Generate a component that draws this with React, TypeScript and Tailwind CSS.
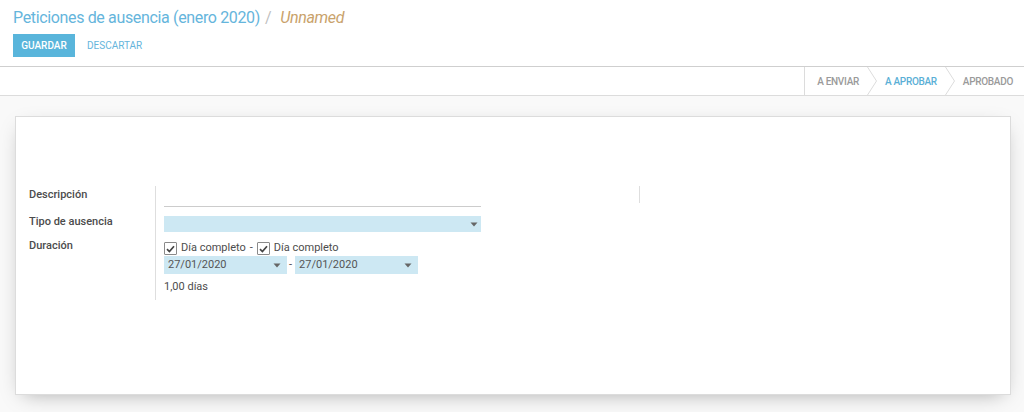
import React from 'react';

const font = { fontFamily: 'Roboto, "Noto Sans", sans-serif' };

const Chevron = () => (
  <svg width="10" height="28" viewBox="0 0 10 28" className="shrink-0">
    <path d="M0.5 0 L9.5 14 L0.5 28" fill="none" stroke="#dcdcdc" strokeWidth="1" />
  </svg>
);

const Caret = () => (
  <svg width="8" height="5" viewBox="0 0 8 5" className="shrink-0">
    <path d="M0.5 0.5 L7.5 0.5 L4 4.5 Z" fill="#666" />
  </svg>
);

const Check = () => (
  <span className="flex h-[13px] w-[13px] shrink-0 items-center justify-center rounded-[1px] border border-[#8a8a8a] bg-white">
    <svg width="9" height="8" viewBox="0 0 9 8">
      <path d="M1 4.2 L3.4 6.5 L8 1.2" fill="none" stroke="#444" strokeWidth="1.7" />
    </svg>
  </span>
);

const DateInput = () => (
  <div className="flex h-[18px] w-[123px] items-center justify-between bg-[#cde8f3] pl-[4px] pr-[6px] text-[11px] text-[#555]">
    <span>27/01/2020</span>
    <Caret />
  </div>
);

const App = () => {
  return (
    <div className="h-[412px] w-[1024px] overflow-hidden bg-[#f9f9f9]" style={font}>
      <div className="border-b border-[#cfcfcf] bg-white px-[13px] pt-[7px] pb-[9px]">
        <div className="flex items-baseline text-[16px] leading-[22px] tracking-[-0.35px]">
          <span className="text-[#65b5dc]">Peticiones de ausencia (enero 2020)</span>
          <span className="ml-[5px] text-[#bfbfbf]">/</span>
          <span className="ml-[9px] italic text-[#c9a26b]">Unnamed</span>
        </div>
        <div className="mt-[5px] flex items-center">
          <button className="h-[23px] w-[62px] bg-[#59b5db] text-[10px] font-medium uppercase text-white">
            Guardar
          </button>
          <button className="ml-[12px] h-[23px] text-[10px] uppercase text-[#65b5dc]">
            Descartar
          </button>
        </div>
      </div>

      <div className="flex h-[29px] justify-end border-b border-[#dcdcdc] bg-white">
        <div className="flex items-center border-l border-[#dcdcdc] pl-[12px] text-[10px] font-medium uppercase tracking-[-0.3px]">
          <span className="text-[#9a9a9a]">A enviar</span>
          <div className="ml-[8px] mr-[8px]">
            <Chevron />
          </div>
          <span className="text-[#5aafd6]">A aprobar</span>
          <div className="ml-[8px] mr-[8px]">
            <Chevron />
          </div>
          <span className="pr-[11px] text-[#9a9a9a]">Aprobado</span>
        </div>
      </div>

      <div className="pt-[20px] pr-[13px] pl-[15px]">
        <div className="h-[279px] border border-[#dcdcdc] bg-white px-[13px] pt-[69px] shadow-[0_6px_20px_-8px_rgba(0,0,0,0.35)]">
          <div className="flex">
            <div className="flex w-[484px] text-[11px]">
              <div className="flex w-[127px] shrink-0 flex-col border-r border-[#dedede] font-medium leading-[13px] text-[#4c4c4c]">
                <div className="mt-[2px]">Descripción</div>
                <div className="mt-[14px]">Tipo de ausencia</div>
                <div className="mt-[11px]">Duración</div>
              </div>
              <div className="flex flex-col pl-[8px] pb-[7px] text-[#4c4c4c]">
                <div className="h-[21px] w-[317px] border-b border-[#cccccc]" />
                <div className="mt-[9px] flex h-[16px] w-[317px] items-center justify-end bg-[#cde8f3] pr-[3px]">
                  <Caret />
                </div>
                <div className="mt-[9px] flex h-[15px] items-center">
                  <Check />
                  <span className="ml-[4px]">Día completo</span>
                  <span className="mx-[4px]">-</span>
                  <Check />
                  <span className="ml-[4px]">Día completo</span>
                </div>
                <div className="flex items-center">
                  <DateInput />
                  <span className="ml-[2px] mr-[3px]">-</span>
                  <DateInput />
                </div>
                <div className="mt-[6px] leading-[13px]">1,00 días</div>
              </div>
            </div>
            <div className="flex w-[484px]">
              <div className="h-[17px] w-[127px] border-r border-[#dedede]" />
            </div>
          </div>
        </div>
      </div>
    </div>
  );
};

export default App;
